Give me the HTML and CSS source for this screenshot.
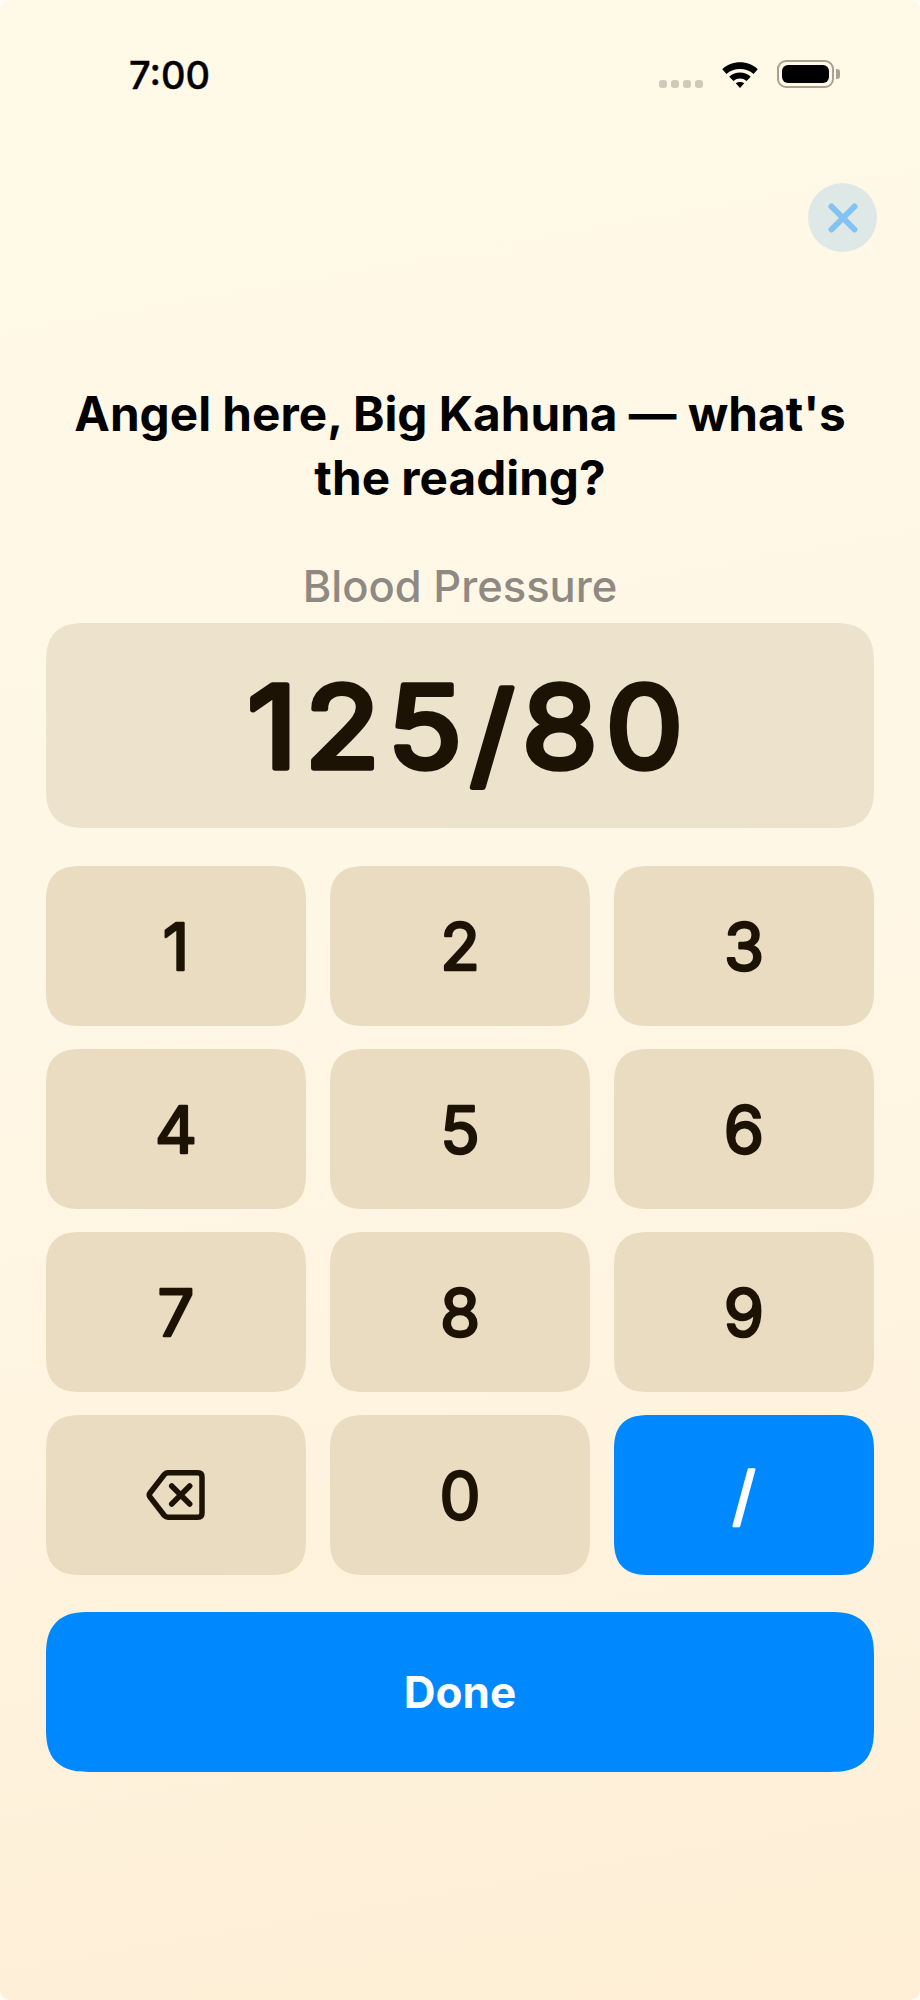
FILE: index.html
```html
<!DOCTYPE html>
<html lang="en">
<head>
    <meta charset="UTF-8">
    <meta name="viewport" content="width=device-width, initial-scale=1.0">
    <title>Vitals entry</title>
    <link rel="stylesheet" href="styles.css">
</head>
<body>
    <div class="screen">
        <div class="status-bar">
            <span class="clock">7:00</span>
            <div class="status-icons">
                <div class="signal">
                    <span></span><span></span><span></span><span></span>
                </div>
                <svg class="wifi" width="38" height="28" viewBox="0 0 40 30">
                    <path d="M1 10 C11 0 29 0 39 10 L34.5 15 C27 8 13 8 5.500 15 Z" fill="#000"/>
                    <path d="M8.500 18 C15 12 25 12 31.500 18 L27 22.500 C23 19 17 19 13 22.500 Z" fill="#000"/>
                    <path d="M15.500 25 C18 23 22 23 24.500 25 L20 30 Z" fill="#000"/>
                </svg>
                <div class="battery">
                    <div class="battery-shell"><div class="battery-fill"></div></div>
                    <div class="battery-cap"></div>
                </div>
            </div>
        </div>

        <div class="close-row">
            <button class="close-btn">
                <svg width="32" height="32" viewBox="0 0 32 32">
                    <path d="M4.500 4.500 L27.500 27.500 M27.500 4.500 L4.500 27.500" stroke="#82c3f4" stroke-width="6" stroke-linecap="round"/>
                </svg>
            </button>
        </div>

        <h1 class="prompt">Angel here, Big Kahuna — what's the reading?</h1>
        <div class="metric-label">Blood Pressure</div>
        <div class="display">
            <svg class="display-text" width="500" height="160" viewBox="0 0 500 160">
                <text x="259" y="122">125<tspan dy="7">/</tspan><tspan dy="-7">80</tspan></text>
            </svg>
        </div>

        <div class="keypad">
            <button class="key"><svg class="digit" viewBox="0 0 100 100"><text x="50" y="74">1</text></svg></button>
            <button class="key"><svg class="digit" viewBox="0 0 100 100"><text x="50" y="74">2</text></svg></button>
            <button class="key"><svg class="digit" viewBox="0 0 100 100"><text x="50" y="74">3</text></svg></button>
            <button class="key"><svg class="digit" viewBox="0 0 100 100"><text x="50" y="74">4</text></svg></button>
            <button class="key"><svg class="digit" viewBox="0 0 100 100"><text x="50" y="74">5</text></svg></button>
            <button class="key"><svg class="digit" viewBox="0 0 100 100"><text x="50" y="74">6</text></svg></button>
            <button class="key"><svg class="digit" viewBox="0 0 100 100"><text x="50" y="74">7</text></svg></button>
            <button class="key"><svg class="digit" viewBox="0 0 100 100"><text x="50" y="74">8</text></svg></button>
            <button class="key"><svg class="digit" viewBox="0 0 100 100"><text x="50" y="74">9</text></svg></button>
            <button class="key">
                <svg width="60" height="52" viewBox="0 0 60 52">
                    <path d="M22 3.750 H52 Q56 3.750 56 8 V44 Q56 48.250 52 48.250 H22 Q20 48.250 18.500 46.700 L4 28 Q2.500 26 4 24 L18.500 5.300 Q20 3.750 22 3.750 Z" fill="none" stroke="#1c1305" stroke-width="5.500" stroke-linejoin="round"/>
                    <path d="M25.700 17 L43.700 35 M43.700 17 L25.700 35" stroke="#1c1305" stroke-width="5.500" stroke-linecap="round"/>
                </svg>
            </button>
            <button class="key"><svg class="digit" viewBox="0 0 100 100"><text x="50" y="74">0</text></svg></button>
            <button class="key key-accent"><svg class="digit" viewBox="0 0 100 100"><text x="50" y="74">/</text></svg></button>
        </div>

        <button class="done-btn">Done</button>
    </div>
</body>
</html>
```

FILE: styles.css
```css
body {
    margin: 0;
    background-color: #fffdf6;
    font-family: Inter, "Liberation Sans", sans-serif;
}

button {
    border: none;
    padding: 0;
    font-family: inherit;
    cursor: pointer;
}

.screen {
    width: 920px;
    height: 2000px;
    box-sizing: border-box;
    padding: 0 46px;
    border-radius: 10px;
    overflow: hidden;
    background: linear-gradient(170deg, #fff9e8 0%, #fff7e6 45%, #feefd6 100%);
}

.status-bar {
    height: 140px;
    box-sizing: border-box;
    padding: 55px 34px 0 83px;
    display: flex;
    justify-content: space-between;
    align-items: flex-start;
}

.clock {
    font-size: 38px;
    line-height: 40px;
    font-weight: 500;
    -webkit-text-stroke: 0.4px #000;
    color: #000;
}

.status-icons {
    display: flex;
    align-items: center;
    gap: 18px;
    padding-top: 5px;
}

.signal {
    display: flex;
    gap: 4px;
    margin-top: 20px;
}

.signal span {
    width: 8px;
    height: 8px;
    border-radius: 3px;
    background-color: #cfc9bc;
}

.battery {
    display: flex;
    align-items: center;
    gap: 2px;
}

.battery-shell {
    width: 57px;
    height: 28px;
    box-sizing: border-box;
    padding: 3px;
    border: 2px solid #a8a294;
    border-radius: 9px;
}

.battery-fill {
    height: 100%;
    border-radius: 6px;
    background-color: #000;
}

.battery-cap {
    width: 4px;
    height: 10px;
    border-radius: 0 3px 3px 0;
    background-color: #a8a294;
}

.close-row {
    display: flex;
    justify-content: flex-end;
    margin: 43px -3px 0 0;
}

.close-btn {
    width: 69px;
    height: 69px;
    border-radius: 50%;
    background-color: #dee8e6;
    display: flex;
    align-items: center;
    justify-content: center;
}

.prompt {
    margin: 130px 0 0;
    padding: 0 24px;
    font-size: 47.700px;
    line-height: 64px;
    font-weight: 700;
    text-align: center;
    color: #000;
}

.metric-label {
    margin-top: 46px;
    font-size: 43.500px;
    line-height: 60px;
    font-weight: 500;
    text-align: center;
    color: #8e8a83;
}

.display {
    height: 205px;
    margin-top: 7px;
    border-radius: 40px;
    corner-shape: superellipse(1.4);
    background-color: #ede3cc;
    display: flex;
    align-items: center;
    justify-content: center;
}

.display-text text {
    font-size: 114px;
    font-weight: 400;
    letter-spacing: 7px;
    text-anchor: middle;
    transform-box: fill-box;
    transform-origin: center;
    transform: scaleX(1.08);
    fill: #1c1305;
    stroke: #1c1305;
    stroke-width: 5.500px;
    stroke-linejoin: round;
}

.keypad {
    display: grid;
    grid-template-columns: repeat(3, 1fr);
    grid-auto-rows: 160px;
    gap: 23px 24px;
    margin-top: 38px;
}

.key {
    border-radius: 36px;
    corner-shape: superellipse(1.4);
    background-color: #e9dcc0;
    color: #1c1305;
    display: flex;
    align-items: center;
    justify-content: center;
}

.digit {
    width: 100px;
    height: 100px;
}

.digit text {
    font-size: 65px;
    font-weight: 400;
    text-anchor: middle;
    fill: currentColor;
    stroke: currentColor;
    stroke-width: 2.500px;
    stroke-linejoin: round;
}

.key-accent {
    background-color: #0088ff;
    color: #fff;
}

.done-btn {
    display: block;
    width: 100%;
    height: 160px;
    margin-top: 37px;
    border-radius: 44px;
    corner-shape: superellipse(1.4);
    background-color: #0088ff;
    color: #fff;
    font-size: 44px;
    font-weight: 700;
}
```
